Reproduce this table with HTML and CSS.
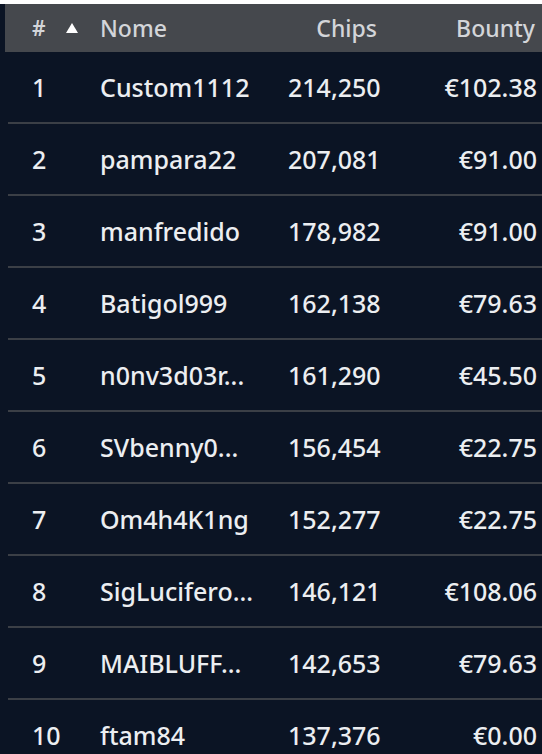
FILE: index.html
```html
<!DOCTYPE html>
<html lang="it">
<head>
<meta charset="utf-8">
<link rel="stylesheet" href="styles.css">
</head>
<body>
<div class="board">
  <div class="head">
    <span class="h-rank">#</span>
    <span class="h-sort"><svg width="12" height="10" viewBox="0 0 12 10"><polygon points="6,0 12,10 0,10" fill="#ffffff"/></svg></span>
    <span class="h-name">Nome</span>
    <span class="h-chips">Chips</span>
    <span class="h-bounty">Bounty</span>
  </div>
  <div class="rows">
    <div class="row"><span class="rank">1</span><span class="name">Custom1112</span><span class="chips">214,250</span><span class="bounty">€102.38</span></div>
    <div class="row"><span class="rank">2</span><span class="name">pampara22</span><span class="chips">207,081</span><span class="bounty">€91.00</span></div>
    <div class="row"><span class="rank">3</span><span class="name">manfredido</span><span class="chips">178,982</span><span class="bounty">€91.00</span></div>
    <div class="row"><span class="rank">4</span><span class="name">Batigol999</span><span class="chips">162,138</span><span class="bounty">€79.63</span></div>
    <div class="row"><span class="rank">5</span><span class="name">n0nv3d03r...</span><span class="chips">161,290</span><span class="bounty">€45.50</span></div>
    <div class="row"><span class="rank">6</span><span class="name">SVbenny0...</span><span class="chips">156,454</span><span class="bounty">€22.75</span></div>
    <div class="row"><span class="rank">7</span><span class="name">Om4h4K1ng</span><span class="chips">152,277</span><span class="bounty">€22.75</span></div>
    <div class="row"><span class="rank">8</span><span class="name">SigLucifero...</span><span class="chips">146,121</span><span class="bounty">€108.06</span></div>
    <div class="row"><span class="rank">9</span><span class="name">MAIBLUFF...</span><span class="chips">142,653</span><span class="bounty">€79.63</span></div>
    <div class="row"><span class="rank">10</span><span class="name">ftam84</span><span class="chips">137,376</span><span class="bounty">€0.00</span></div>
  </div>
</div>
</body>
</html>
```
FILE: styles.css
```css
html, body {
  margin: 0;
  padding: 0;
  background: #ffffff;
  height: 754px;
  overflow: hidden;
}
.board {
  margin-top: 4px;
  background: #0b1424;
  padding-left: 5px;
  height: 760px;
  font-family: "Noto Sans", "Open Sans", sans-serif;
  font-size: 25px;
  font-weight: 500;
  color: #eceef1;
}
.head {
  display: grid;
  grid-template-columns: 34px 34px 180px 97px 1fr;
  align-items: center;
  height: 48px;
  background: #45484d;
  color: #d3d5d9;
  font-size: 23px;
  padding-left: 27px;
  padding-right: 7px;
}
.h-rank { font-size: 21px; font-weight: 600; }
.h-sort { display: flex; align-items: center; }
.h-chips { text-align: right; }
.h-bounty { text-align: right; }
.rows {
  margin-left: 3px;
}
.row {
  display: grid;
  grid-template-columns: 68px 188px 89px 1fr;
  align-items: center;
  height: 70px;
  border-bottom: 2px solid #3b3f46;
  padding-left: 24px;
  padding-right: 5px;
}
.chips { text-align: right; }
.bounty { text-align: right; }
```
